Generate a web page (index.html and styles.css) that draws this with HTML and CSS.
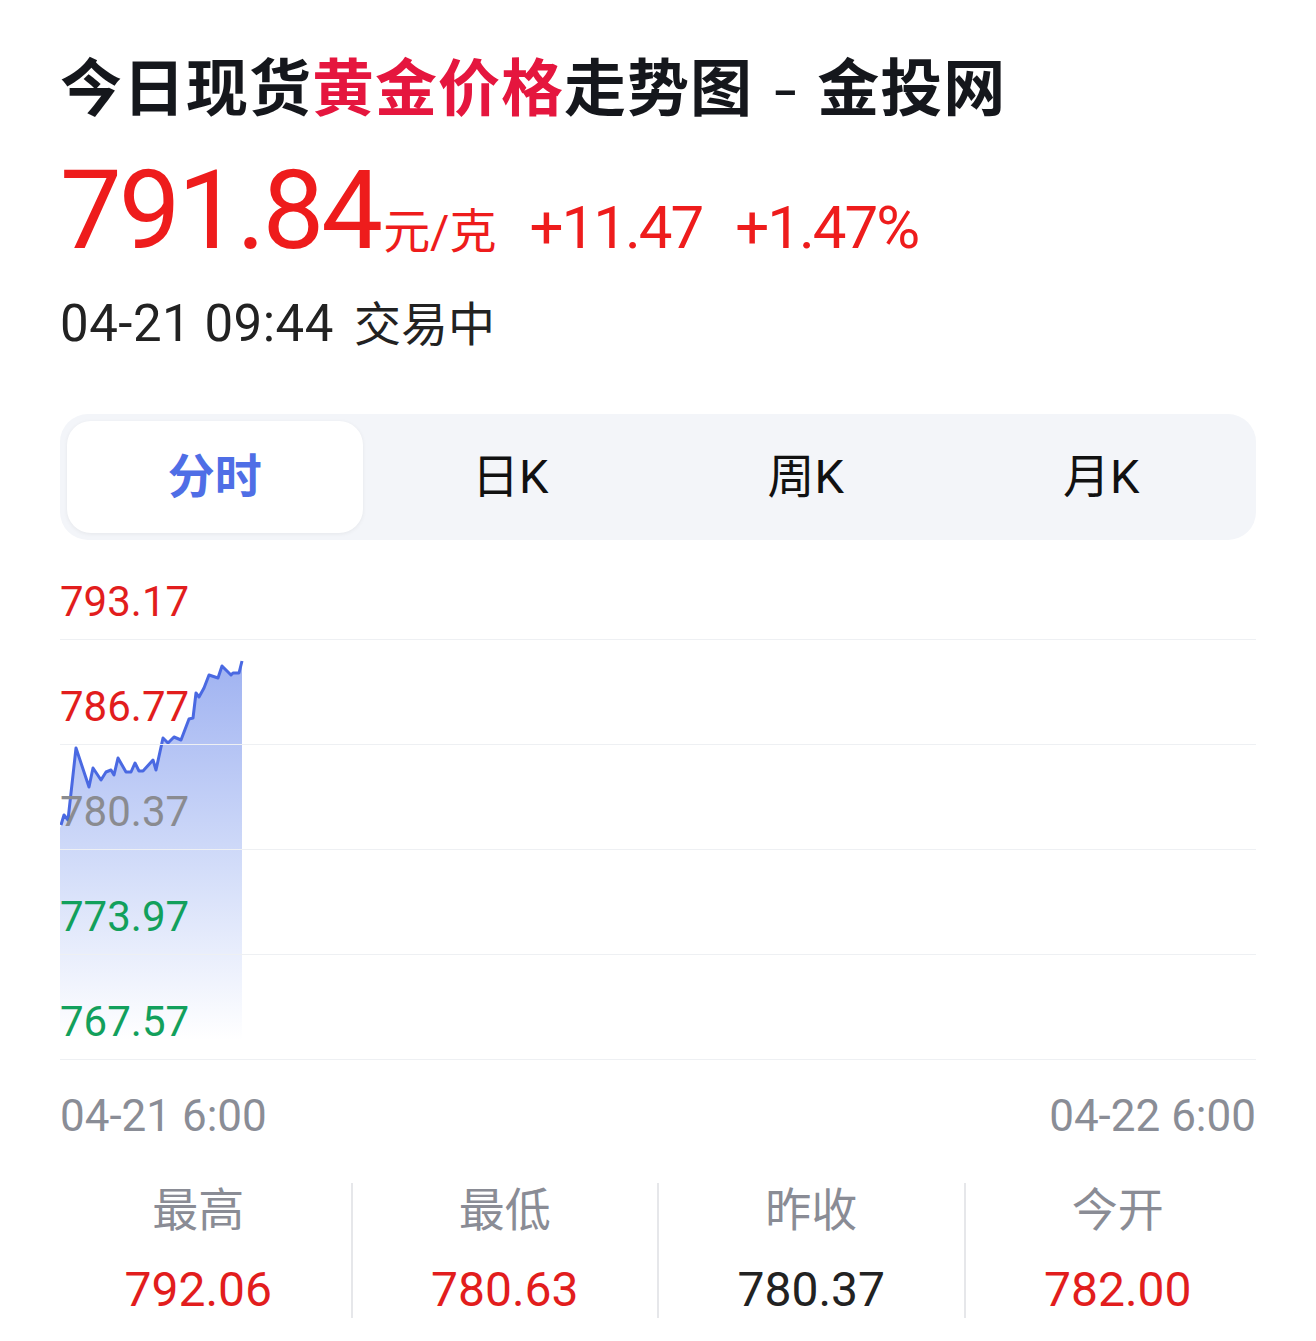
FILE: index.html
```html
<!DOCTYPE html>
<html lang="zh-CN">
<head>
  <meta charset="UTF-8" />
  <meta name="viewport" content="width=device-width, initial-scale=1.0"/>
  <title>今日现货黄金价格走势图 - 金投网</title>
  <link rel="stylesheet" href="styles.css">
</head>
<body>
  <main class="page">
    <h1 class="title">今日现货<span class="hl">黄金价格</span>走势图<span class="dash">-</span>金投网</h1>

    <div class="quote">
      <span class="price">791.84</span>
      <span class="unit">元/克</span>
      <span class="change">+11.47</span>
      <span class="change">+1.47%</span>
    </div>
    <p class="status"><span class="time">04-21 09:44</span>交易中</p>

    <nav class="tabs">
      <div class="tab active">分时</div>
      <div class="tab">日K</div>
      <div class="tab">周K</div>
      <div class="tab">月K</div>
    </nav>

    <section class="chart">
      <svg class="plot" viewBox="0 0 1196 500" preserveAspectRatio="none">
        <defs>
          <linearGradient id="area" x1="0" y1="100" x2="0" y2="480" gradientUnits="userSpaceOnUse">
            <stop offset="0" stop-color="#9fb2f1" />
            <stop offset="0.55" stop-color="#d3ddf9" />
            <stop offset="1" stop-color="#ffffff" />
          </linearGradient>
        </defs>
        <polygon fill="url(#area)" points="0,480 0,268 1,265 4,255 8,260 16,188 29,227 33,208 41,220 46,212 51,210 54,215 58,198 66,212 71,212 75,203 79,211 83,211 93,200 96,210 103,178 108,183 114,177 121,180 129,159 133,158 136,133 139,137 144,128 149,115 158,118 162,106 171,115 173,113 179,113 182,101 182,480" />
        <polyline fill="none" stroke="#4a69e2" stroke-width="3" stroke-linejoin="round" points="1,265 4,255 8,260 16,188 29,227 33,208 41,220 46,212 51,210 54,215 58,198 66,212 71,212 75,203 79,211 83,211 93,200 96,210 103,178 108,183 114,177 121,180 129,159 133,158 136,133 139,137 144,128 149,115 158,118 162,106 171,115 173,113 179,113 182,101" />
      </svg>
      <div class="row first"><span class="up">793.17</span></div>
      <div class="row"><span class="up">786.77</span></div>
      <div class="row"><span class="flat">780.37</span></div>
      <div class="row"><span class="down">773.97</span></div>
      <div class="row"><span class="down">767.57</span></div>
    </section>

    <div class="axis">
      <span>04-21 6:00</span>
      <span>04-22 6:00</span>
    </div>

    <section class="stats">
      <div class="stat">
        <div class="label">最高</div>
        <div class="value up">792.06</div>
      </div>
      <div class="stat">
        <div class="label">最低</div>
        <div class="value up">780.63</div>
      </div>
      <div class="stat">
        <div class="label">昨收</div>
        <div class="value">780.37</div>
      </div>
      <div class="stat">
        <div class="label">今开</div>
        <div class="value up">782.00</div>
      </div>
    </section>
  </main>
</body>
</html>
```

FILE: styles.css
```css
body {
  font-family: Roboto, "Noto Sans CJK SC", sans-serif;
  background-color: #fff;
  color: #16181d;
  margin: 0;
  padding: 0;
}
.page {
  padding: 53px 60px 0;
}
.title {
  font-size: 62px;
  line-height: 74px;
  font-weight: 700;
  letter-spacing: 1px;
  margin: 0;
  color: #15171c;
}
.hl {
  color: #e5163e;
}
.dash {
  display: inline-block;
  margin: 0 22px 0 24px;
  font-weight: 400;
  transform: scaleX(1.3);
}
.quote {
  display: flex;
  align-items: baseline;
  margin-top: 29px;
  color: #ee1c1c;
}
.price {
  font-size: 110px;
  line-height: 110px;
  letter-spacing: -3px;
}
.unit {
  font-size: 47px;
  margin-left: 3px;
}
.change {
  font-size: 60px;
  letter-spacing: -2px;
  margin-left: 33px;
}
.status {
  font-size: 47px;
  line-height: 56px;
  color: #222;
  margin: 30px 0 0;
}
.time {
  font-size: 51px;
  letter-spacing: 0.5px;
  margin-right: 20px;
}
.tabs {
  display: flex;
  margin-top: 61px;
  padding: 7px;
  background-color: #f3f5f9;
  border-radius: 28px;
}
.tab {
  flex: 1;
  height: 112px;
  box-sizing: border-box;
  padding-bottom: 10px;
  display: flex;
  align-items: center;
  justify-content: center;
  font-size: 47px;
  color: #111;
}
.tab.active {
  background-color: #fff;
  border-radius: 24px;
  color: #4f6ee6;
  font-weight: 700;
  box-shadow: 0 1px 4px rgba(0,0,0,0.06);
}
.chart {
  position: relative;
  margin-top: 20px;
}
.plot {
  position: absolute;
  left: 0;
  top: 0;
  width: 100%;
  height: 100%;
}
.row {
  position: relative;
  height: 105px;
  border-bottom: 1px solid #eef0f3;
  box-sizing: border-box;
  display: flex;
  align-items: flex-end;
  padding-bottom: 13px;
  font-size: 42px;
  line-height: 48px;
}
.row.first {
  height: 80px;
}
.up {
  color: #e21d1d;
}
.flat {
  color: #8a8b90;
}
.down {
  color: #12a05c;
}
.axis {
  display: flex;
  justify-content: space-between;
  margin-top: 32px;
  font-size: 44px;
  line-height: 48px;
  color: #8a8d96;
}
.stats {
  display: flex;
  margin: 43px -14px 0;
}
.stat {
  flex: 1;
  text-align: center;
  border-left: 2px solid #e6e7ea;
}
.stat:first-child {
  border-left: none;
}
.label {
  font-size: 46px;
  line-height: 54px;
  color: #8a8c95;
}
.value {
  font-size: 48px;
  line-height: 56px;
  margin-top: 25px;
  color: #222;
}
.value.up {
  color: #e21d1d;
}
```
